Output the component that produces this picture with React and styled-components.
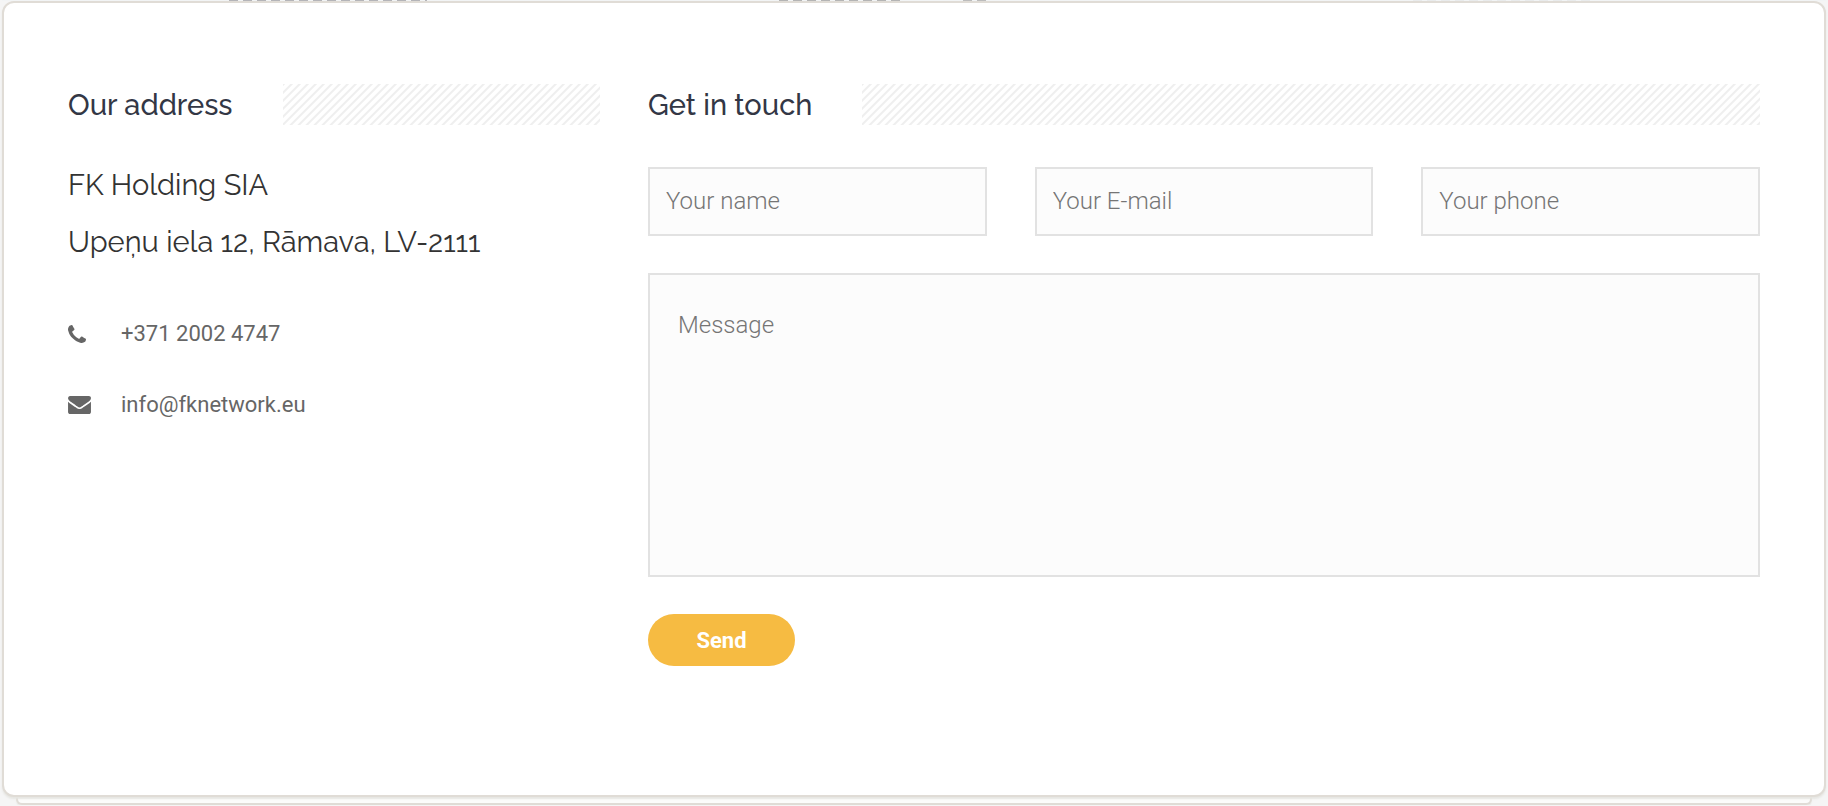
import React from 'react';
import styled, { createGlobalStyle } from 'styled-components';

const Global = createGlobalStyle`
  * { box-sizing: border-box; }
  html, body { margin: 0; background: #f5f5f5; }
  body { font-family: Roboto, sans-serif; color: #666; overflow: hidden; }
`;

const Page = styled.main`
  padding: 0 2px;
`;

/* Lower edge of the content that scrolls behind the card. */
const Behind = styled.div`
  display: flex;
  height: 1px;
  padding-left: 227px;
  background: #f2f4f5;
`;

const Dashes = styled.span`
  width: ${(p) => p.$width}px;
  margin-right: ${(p) => p.$after}px;
  background: repeating-linear-gradient(90deg, ${(p) => p.$color} 0 9px, transparent 9px 14px);
`;

const Card = styled.section`
  position: relative;
  z-index: 1;
  display: grid;
  grid-template-columns: repeat(3, minmax(0, 1fr));
  gap: 48px;
  padding: 81px 64px 129px;
  background: #fff;
  border: 2px solid #e0dcd6;
  border-radius: 12px;
  box-shadow: 0 2px 2px #e6e6e2;
`;

const NextCard = styled.div`
  height: 8px;
  margin: 0 14px;
  background: #fcfcfb;
  border: 2px solid #e0dcd6;
  border-top: 0;
  border-radius: 0 0 6px 6px;
  box-shadow: 0 2px 1px #ebebe8;
`;

const Column = styled.div`
  grid-column: span ${(p) => p.$span};
`;

const Heading = styled.div`
  display: flex;
  align-items: center;
  gap: 50px;
  height: 41px;
  margin-bottom: 42px;

  &::after {
    content: '';
    flex: 1;
    height: 41px;
    background: linear-gradient(
      135deg,
      #efefef 0 10%, #fff 18% 42%, #efefef 50% 60%, #fff 68% 92%, #efefef 100%
    ) 0 0 / 8px 8px;
  }
`;

const Title = styled.h2`
  margin: 0;
  font: 500 29px/40px Raleway, Lato, sans-serif;
  color: #333745;
`;

const Address = styled.address`
  margin: -10px 0 27px;
  font: 400 29px/57px Raleway, Lato, sans-serif;
  color: #333;
`;

const Contact = styled.a`
  display: flex;
  align-items: center;
  height: 71px;
  font-size: 22px;
  color: #666;
  text-decoration: none;
`;

const IconSlot = styled.span`
  display: flex;
  width: 53px;
`;

const Form = styled.form`
  display: grid;
  grid-template-columns: repeat(3, minmax(0, 1fr));
  column-gap: 48px;
  row-gap: 37px;
`;

const Field = styled.input`
  width: 100%;
  height: 69px;
  padding: 0 16px 2px;
  background: #fcfcfc;
  border: 2px solid #e2e2e2;
  border-radius: 0;
  font: 300 24px/28px Roboto, sans-serif;
  color: #333;
  outline: 0;
  &::placeholder { color: #757575; opacity: 1; }
`;

const Message = styled(Field)`
  grid-column: 1 / -1;
  display: block;
  height: 304px;
  padding: 36px 28px;
  resize: none;
`;

const Send = styled.button`
  justify-self: start;
  min-width: 147px;
  height: 52px;
  padding: 2px 48px 0;
  background: #f6bb42;
  border: 0;
  border-radius: 26px;
  font: 700 22px/28px Roboto, sans-serif;
  color: #fff;
  cursor: pointer;
`;

const PhoneIcon = () => (
  <svg width="18" height="18" viewBox="0 128 1408 1408" fill="currentColor" aria-hidden="true">
    <path d="M1408 1240q0 27-10 70.5t-21 68.5q-21 50-122 106-94 51-186 51-27 0-53-3.5t-57.5-12.5-47-14.5-55.5-20.5-49-18q-98-35-175-83-127-79-264-216t-216-264q-48-77-83-175-3-9-18-49t-20.5-55.5-14.5-47-12.5-57.5-3.5-53q0-92 51-186 56-101 106-122 25-11 68.5-21t70.5-10q14 0 21 3 18 6 53 76 11 19 30 54t35 63.5 31 53.5q3 4 17.5 25t21.5 35.5 7 28.5q0 20-28.5 50t-62 55-62 53-28.5 46q0 9 5 22.5t8.5 20.5 14 24 11.5 19q76 137 174 235t235 174q2 1 19 11.5t24 14 20.5 8.5 22.5 5q18 0 46-28.5t53-62 55-62 50-28.5q14 0 28.5 7t35.5 21.5 25 17.5q25 15 53.5 31t63.5 35 54 30q70 35 76 53 3 7 3 21z" />
  </svg>
);

const MailIcon = () => (
  <svg width="23" height="18" viewBox="0 256 1792 1408" fill="currentColor" aria-hidden="true">
    <path d="M1792 710v794q0 66-47 113t-113 47h-1472q-66 0-113-47t-47-113v-794q44 49 101 87 362 246 497 345 57 42 92.5 65.5t94.5 48 110 24.5h2q51 0 110-24.5t94.5-48 92.5-65.5q170-123 498-345 57-39 100-87zM1792 416q0 79-49 151t-122 123q-376 261-468 325-10 7-42.5 31t-54 38.5-52 32.5-57.5 27-50 9h-2q-23 0-50-9t-57.5-27-52-32.5-54-38.5-42.5-31q-91-64-262-182.5t-205-142.5q-62-42-117-115.5t-55-136.5q0-78 41.5-130t118.5-52h1472q65 0 112.5 47t47.5 113z" />
  </svg>
);

export default function App() {
  return (
    <Page>
      <Global />
      <Behind aria-hidden="true">
        <Dashes $width={198} $after={352} $color="#b4b4b8" />
        <Dashes $width={121} $after={63} $color="#b4b4b4" />
        <Dashes $width={23} $after={427} $color="#bcbcbc" />
        <Dashes $width={180} $after={0} $color="#e9ebec" />
      </Behind>
      <Card>
        <Column $span={1}>
          <Heading><Title>Our address</Title></Heading>
          <Address>FK Holding SIA<br />Upeņu iela 12, Rāmava, LV-2111</Address>
          <Contact href="tel:+37120024747">
            <IconSlot><PhoneIcon /></IconSlot>+371 2002 4747
          </Contact>
          <Contact href="mailto:info@fknetwork.eu">
            <IconSlot><MailIcon /></IconSlot>info@fknetwork.eu
          </Contact>
        </Column>
        <Column $span={2}>
          <Heading><Title>Get in touch</Title></Heading>
          <Form>
            <Field aria-label="Your name" placeholder="Your name" />
            <Field type="email" aria-label="Your E-mail" placeholder="Your E-mail" />
            <Field type="tel" aria-label="Your phone" placeholder="Your phone" />
            <Message as="textarea" aria-label="Message" placeholder="Message" />
            <Send type="button">Send</Send>
          </Form>
        </Column>
      </Card>
      <NextCard />
    </Page>
  );
}
